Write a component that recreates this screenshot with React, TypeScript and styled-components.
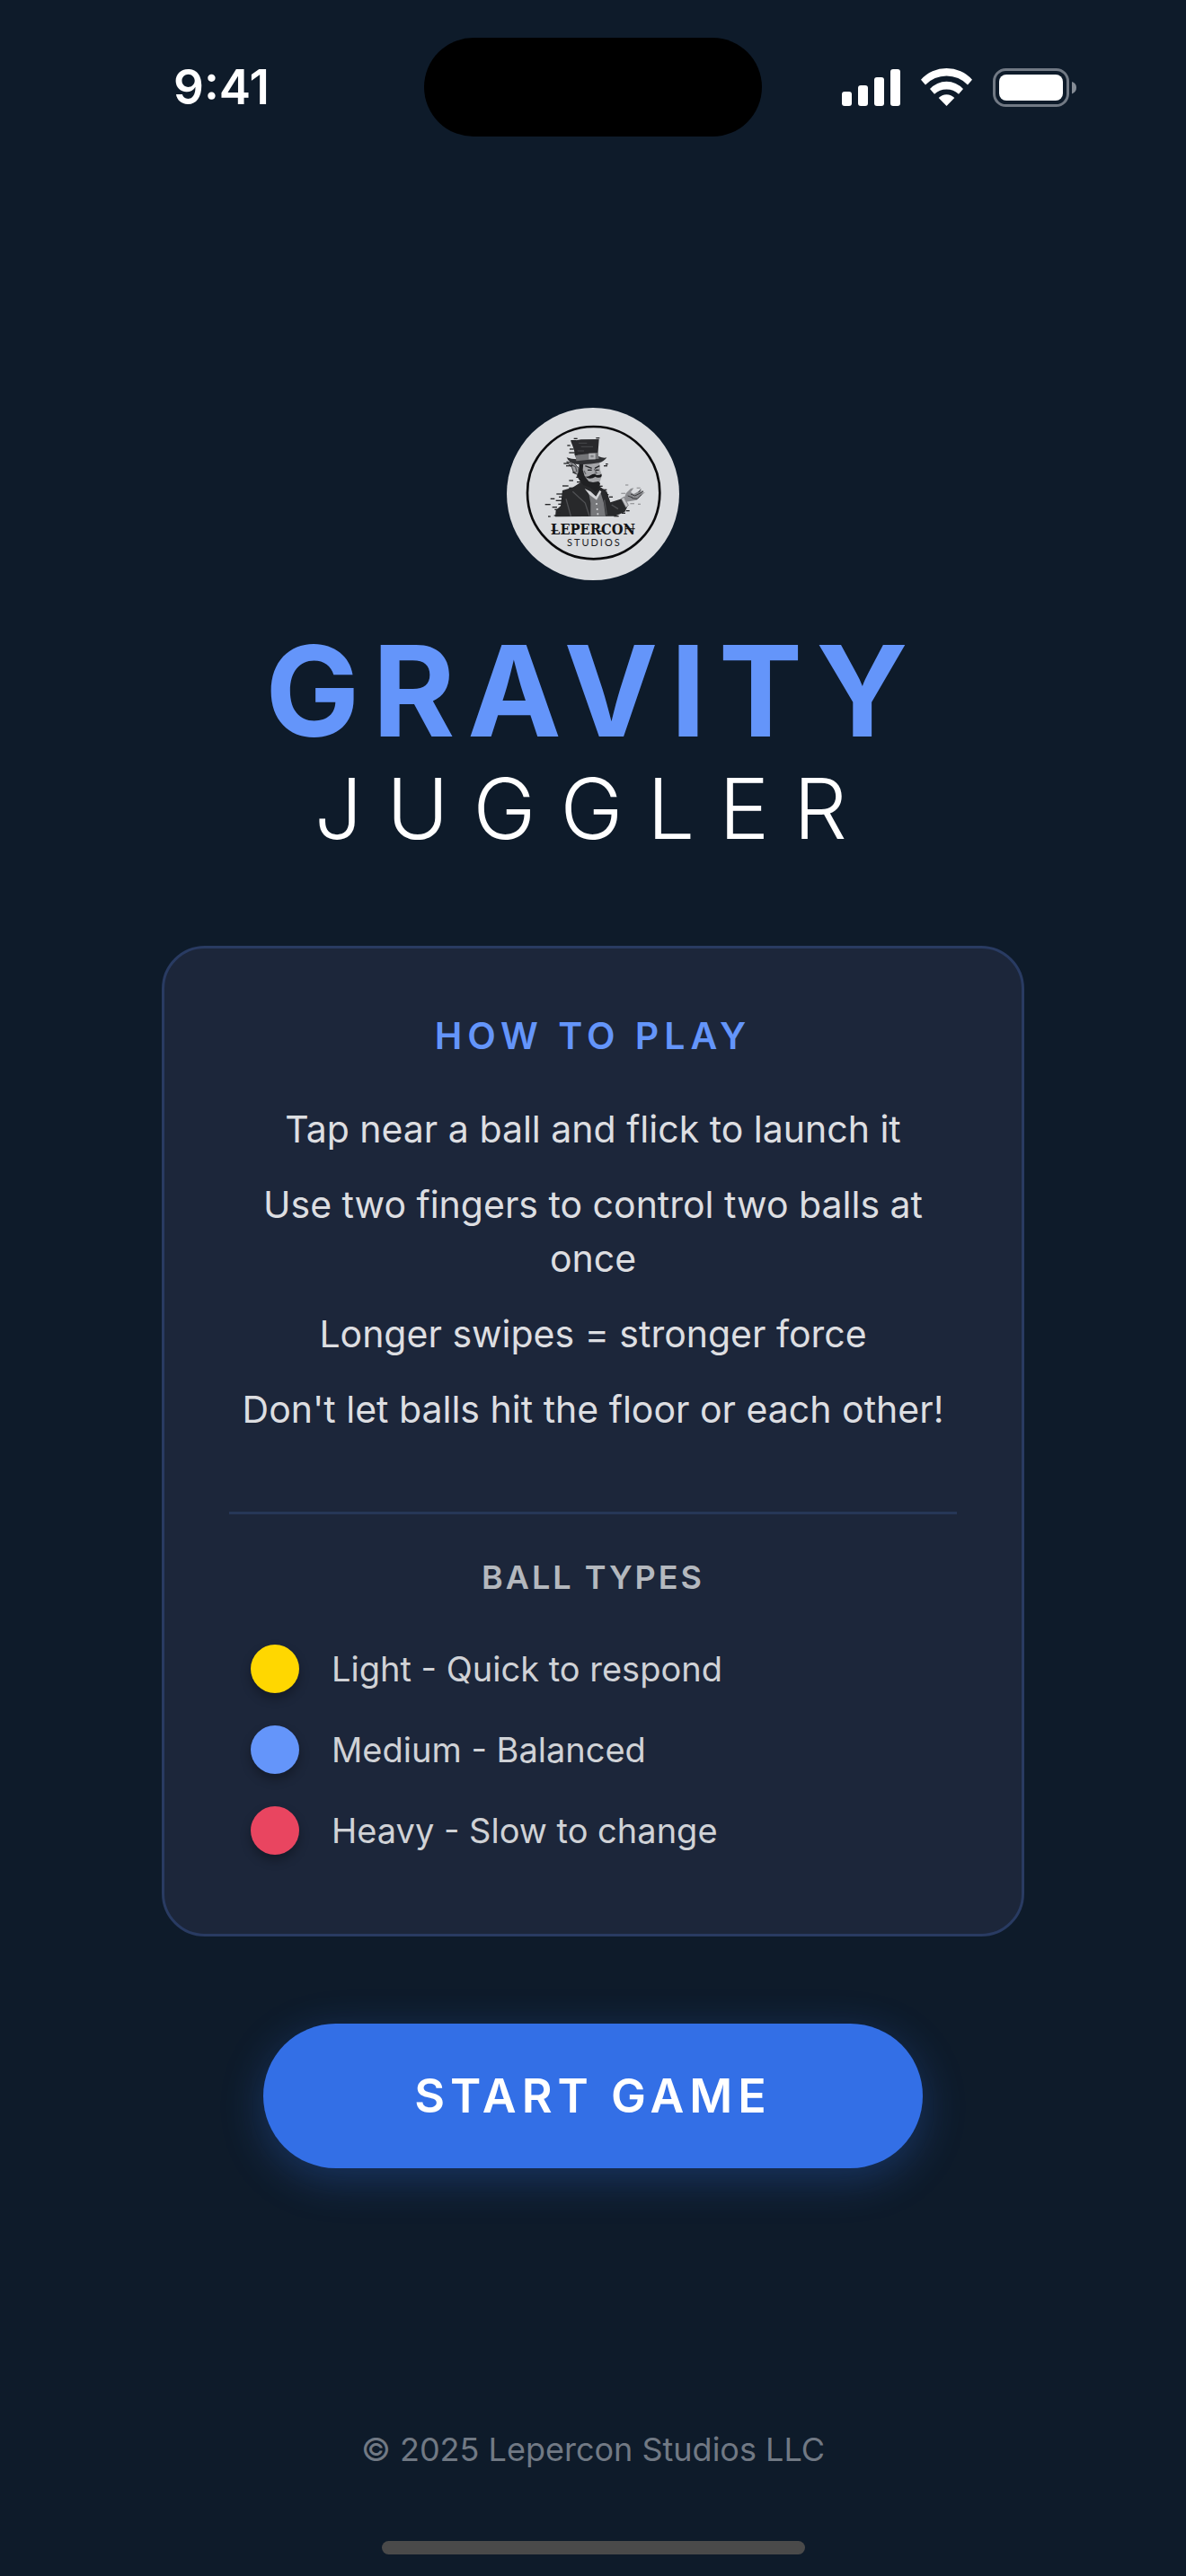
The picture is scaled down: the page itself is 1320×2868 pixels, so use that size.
import React from 'react';
import styled, { createGlobalStyle } from 'styled-components';

const GlobalStyle = createGlobalStyle`
    * {
        box-sizing: border-box;
    }
    body {
        margin: 0;
        background: #0e1b2a;
        font-family: Inter, "Liberation Sans", sans-serif;
    }
    h1, h2, h3, p, ul {
        margin: 0;
        padding: 0;
        font-weight: inherit;
    }
`;

// the two outer rows share the free height, so the menu stays centered
const Screen = styled.div`
    display: grid;
    grid-template-rows: 1fr auto 1fr;
    min-height: 100vh;
`;

const StatusBar = styled.header`
    display: grid;
    grid-template-columns: 1fr 376px 1fr;
    align-items: center;
    align-self: start;
    padding-top: 42px;
`;

const Time = styled.span`
    margin-left: 193px;
    color: #fff;
    font-size: 53px;
    font-weight: 600;
    line-height: 64px;
`;

const Island = styled.div`
    height: 110px;
    border-radius: 55px;
    background: #000;
`;

const StatusIcons = styled.svg`
    justify-self: end;
    margin-right: 120px;
`;

const Menu = styled.main`
    display: flex;
    flex-direction: column;
    align-items: center;
`;

const Logo = styled.svg`
    width: 192px;
    height: 192px;
    margin-bottom: 48px;
`;

const Title = styled.h1`
    display: flex;
    flex-direction: column;
    align-items: center;
    margin-bottom: 97px;
`;

const TitleMain = styled.span`
    color: #6495fa;
    font-size: 140px;
    font-weight: 700;
    line-height: 150px;
    letter-spacing: 14px;
`;

const TitleSub = styled.span`
    color: #fff;
    font-size: 94px;
    font-weight: 300;
    line-height: 112px;
    letter-spacing: 27px;
`;

const Card = styled.section`
    width: 100%;
    max-width: 960px;
    padding: 72px 72px 88px;
    border: 3px solid #293b62;
    border-radius: 48px;
    background: #1c263a;
    text-align: center;
`;

const CardTitle = styled.h2`
    margin-bottom: 48px;
    color: #6495fa;
    font-size: 41px;
    font-weight: 600;
    line-height: 51px;
    letter-spacing: 6px;
`;

const Instruction = styled.p`
    margin-bottom: 24px;
    color: #dddee1;
    font-size: 41px;
    line-height: 60px;
`;

const BallTypes = styled.div`
    margin-top: 84px;
    padding-top: 48px;
    border-top: 3px solid #263757;
`;

const BallTypesTitle = styled.h3`
    margin-bottom: 52px;
    color: #b4b8be;
    font-size: 36px;
    font-weight: 600;
    line-height: 45px;
    letter-spacing: 3px;
`;

const BallList = styled.ul`
    display: flex;
    flex-direction: column;
    gap: 36px;
    padding-left: 24px;
    list-style: none;
`;

const BallRow = styled.li`
    display: flex;
    align-items: center;
    gap: 36px;
    color: #d0d2d6;
    font-size: 38px;
    line-height: 54px;
`;

const Ball = styled.span<{ $color: string }>`
    width: 54px;
    height: 54px;
    border-radius: 50%;
    background: ${({ $color }) => $color};
    box-shadow: 0 6px 12px rgba(0, 0, 0, 0.3);
`;

const StartButton = styled.button`
    height: 161px;
    margin-top: 97px;
    padding: 0 168px;
    border: none;
    border-radius: 81px;
    background: #336fe6;
    box-shadow: 0 12px 48px rgba(51, 111, 230, 0.3);
    color: #fff;
    font-family: inherit;
    font-size: 52px;
    font-weight: 600;
    letter-spacing: 6px;
    cursor: pointer;
`;

const Footer = styled.footer`
    display: flex;
    flex-direction: column;
    align-items: center;
    align-self: end;
    gap: 80px;
    padding-bottom: 24px;
    color: #717984;
    font-size: 36px;
    line-height: 44px;
`;

const HomeIndicator = styled.div`
    width: 471px;
    height: 15px;
    border-radius: 8px;
    background: #4a4a4a;
`;

const instructions = [
    "Tap near a ball and flick to launch it",
    "Use two fingers to control two balls at once",
    "Longer swipes = stronger force",
    "Don't let balls hit the floor or each other!",
];

const balls = [
    { color: "#ffd700", label: "Light - Quick to respond" },
    { color: "#6495fa", label: "Medium - Balanced" },
    { color: "#e94560", label: "Heavy - Slow to change" },
];

// x, y and length of the glitch dashes around the figure
const dashes = [
    [256, 150, 18], [266, 143, 12], [340, 141, 12], [244, 166, 10], [252, 178, 14], [250, 190, 24],
    [268, 196, 10], [232, 226, 16], [240, 234, 22], [262, 256, 10], [372, 228, 8], [366, 234, 12],
    [274, 272, 14], [250, 283, 14], [276, 288, 18], [228, 301, 20], [250, 308, 22], [348, 302, 14],
    [208, 328, 22], [216, 338, 14], [188, 344, 14], [206, 350, 30], [170, 363, 18], [214, 362, 18],
    [194, 372, 16], [202, 380, 24], [210, 390, 12], [180, 403, 8], [200, 400, 20], [384, 338, 12],
    [372, 330, 10], [354, 314, 22], [440, 384, 12], [426, 392, 12], [400, 402, 16],
];

const LeperconLogo = () => (
    <Logo viewBox="42 42 576 576" role="img" aria-label="Lepercon Studios">
        <circle cx="330" cy="330" r="288" fill="#dadcdf"/>
        <circle cx="332" cy="326" r="221" fill="none" stroke="#0b0b0d" strokeWidth="8"/>
        {/* coat and arm */}
        <path d="M228 318 L262 308 L290 290 L345 300 L376 322 L388 358 L426 346 L444 374 L436 390 L402 404 L204 406 L206 384 L222 370 Z" fill="#28292b"/>
        <path d="M314 318 L338 342 L354 320 L366 360 L372 404 L322 404 L322 360 Z" fill="#77787b"/>
        <path d="M302 312 L322 322 L340 338 L352 318 L358 322 L342 350 L318 332 Z" fill="#d3d4d7"/>
        <path d="M262 322 L304 360 L318 404 M240 346 L256 404 M368 350 L376 400 M392 366 L414 380" fill="none" stroke="#505154" strokeWidth="4"/>
        <path d="M342 360 V366 M344 378 V384 M346 394 V400" stroke="#d3d4d7" strokeWidth="5"/>
        {/* cuff and open hand */}
        <path d="M424 346 L434 340 L448 368 L440 376 Z" fill="#c3c4c7" stroke="#55565a" strokeWidth="2"/>
        <path d="M434 344 L440 328 L456 312 L466 310 L456 324 L466 330 L484 320 L500 318 L488 328 L504 324 L490 336 L476 350 L454 354 L440 356 Z" fill="#8b8c90"/>
        <path d="M456 330 L470 336 L498 322 M460 344 L478 346 L492 332 M482 324 L490 314 M446 336 L462 342" fill="none" stroke="#38393c" strokeWidth="3"/>
        {/* ear and face */}
        <path d="M242 222 L266 226 L282 244 L282 266 L266 260 L260 242 Z" fill="#9fa0a3" stroke="#333437" strokeWidth="3"/>
        <path d="M256 230 L272 240 L276 256" fill="none" stroke="#55565a" strokeWidth="4"/>
        <path d="M294 226 L352 224 L354 250 L360 268 L352 292 L302 292 L288 262 Z" fill="#a5a6a9"/>
        <path d="M284 226 L298 226 L296 250 L302 270 L316 288 L330 291 L348 288 L354 294 L350 314 L338 322 L320 308 L298 300 L286 286 L276 270 L282 256 Z" fill="#202123"/>
        <path d="M302 270 Q310 276 324 266 Q334 260 342 267 Q352 268 358 263 Q362 274 350 275 Q342 276 338 272 Q324 282 310 276 Z" fill="#18191b"/>
        <path d="M304 236 L326 244 M336 244 L352 236 M312 250 H326 M338 250 H350" fill="none" stroke="#222326" strokeWidth="4"/>
        <path d="M334 246 L342 260 L334 262 M300 252 L306 264" fill="none" stroke="#66676a" strokeWidth="4"/>
        {/* hat */}
        <path d="M242 208 Q258 214 276 214 L348 204 Q366 212 376 208 Q368 222 348 226 Q310 234 272 230 Q248 224 242 208 Z" fill="#303134"/>
        <path d="M256 154 L290 148 L350 147 L346 200 L272 208 L266 180 Z" fill="#29292c"/>
        <path d="M272 200 L346 192 L350 212 L274 220 Z" fill="#747578"/>
        <path d="M316 194 h22 v20 h-22 Z" fill="#b5b6b9"/>
        <path d="M322 200 h10 v8 h-10 Z" fill="#818286"/>
        <path d="M282 160 H310 M290 172 H330 M278 186 H300" stroke="#48494c" strokeWidth="3"/>
        <g fill="#252628">
            {dashes.map(([x, y, length]) => <rect key={`${x}-${y}`} x={x} y={y} width={length} height="4"/>)}
        </g>
        <g fill="#9a9b9e">
            <rect x="438" y="298" width="10" height="4"/>
            <rect x="424" y="326" width="14" height="4"/>
            <rect x="454" y="360" width="14" height="4"/>
            <rect x="480" y="362" width="9" height="4"/>
            <rect x="476" y="308" width="12" height="4"/>
        </g>
        <text x="330" y="464" textAnchor="middle" fontFamily="DejaVu Serif Condensed, DejaVu Serif, serif" fontWeight="700" fontSize="49" fill="#121214">LEPERCON</text>
        <path d="M190 452 H214 M262 446 H284 M348 454 H366 M438 446 H470" stroke="#121214" strokeWidth="3"/>
        <text x="334" y="503" textAnchor="middle" fontFamily="Lato, sans-serif" fontSize="33" letterSpacing="6" fill="#1b1b1e">STUDIOS</text>
    </Logo>
);

const App: React.FC = () => {
    return (
        <Screen>
            <GlobalStyle/>
            <StatusBar>
                <Time>9:41</Time>
                <Island/>
                <StatusIcons width="264" height="44" viewBox="36 24 264 44" fill="#fff" aria-hidden="true">
                    <rect x="37" y="51" width="11" height="16" rx="3"/>
                    <rect x="55" y="44" width="11" height="23" rx="3"/>
                    <rect x="73" y="35" width="11" height="32" rx="3"/>
                    <rect x="91" y="26" width="11" height="41" rx="3"/>
                    <path d="M125 37.7 A38.3 38.3 0 0 1 182 37.7 L177 43.5 A32.6 32.6 0 0 0 130 43.5 Z"/>
                    <path d="M135 48 A25 25 0 0 1 172 48 L167 53.7 A20 20 0 0 0 140 53.7 Z"/>
                    <path d="M144.7 58 A12 12 0 0 1 162.3 58 L153.5 67 Z"/>
                    <rect x="206.5" y="26.5" width="82" height="40" rx="13" fill="none" stroke="#717984" strokeWidth="3"/>
                    <rect x="212" y="32" width="71" height="29" rx="8"/>
                    <path d="M293 40 Q298 41.5 298 46.5 Q298 51.5 293 53.5 Z" fill="#858c95"/>
                </StatusIcons>
            </StatusBar>
            <Menu>
                <LeperconLogo/>
                <Title>
                    <TitleMain>GRAVITY</TitleMain>
                    <TitleSub>JUGGLER</TitleSub>
                </Title>
                <Card>
                    <CardTitle>HOW TO PLAY</CardTitle>
                    {instructions.map((text) => <Instruction key={text}>{text}</Instruction>)}
                    <BallTypes>
                        <BallTypesTitle>BALL TYPES</BallTypesTitle>
                        <BallList>
                            {balls.map(({ color, label }) => (
                                <BallRow key={label}>
                                    <Ball $color={color}/>
                                    {label}
                                </BallRow>
                            ))}
                        </BallList>
                    </BallTypes>
                </Card>
                <StartButton type="button">START GAME</StartButton>
            </Menu>
            <Footer>
                <p>© 2025 Lepercon Studios LLC</p>
                <HomeIndicator/>
            </Footer>
        </Screen>
    );
};

export default App;
